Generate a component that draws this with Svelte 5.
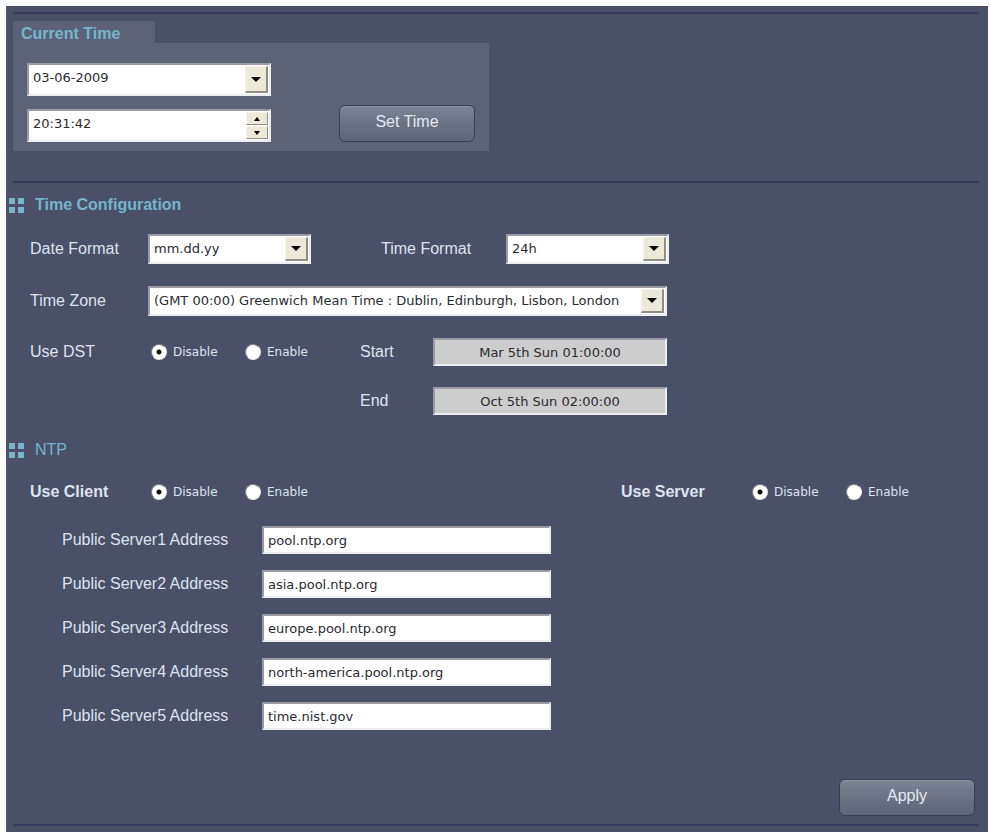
<script>
  let date = '03-06-2009';
  let time = '20:31:42';
  let dateFormat = 'mm.dd.yy';
  let timeFormat = '24h';
  let zone = 'GMT+0';
  let dst = 'disable';
  let client = 'disable';
  let server = 'disable';

  let servers = [
    'pool.ntp.org',
    'asia.pool.ntp.org',
    'europe.pool.ntp.org',
    'north-america.pool.ntp.org',
    'time.nist.gov'
  ];

  // move the clock by whole seconds, wraps at midnight
  function step(n) {
    const [h, m, s] = time.split(':').map(Number);
    const total = (h * 3600 + m * 60 + s + n + 86400) % 86400;
    time = [Math.floor(total / 3600), Math.floor(total / 60) % 60, total % 60]
      .map((v) => String(v).padStart(2, '0'))
      .join(':');
  }
</script>

<main>
  <section class="current">
    <h2 class="tab">Current Time</h2>
    <div class="box">
      <div class="fields">
        <div class="select">
          <select bind:value={date} aria-label="Date">
            <option>03-06-2009</option>
          </select>
          <span class="arrow"></span>
        </div>
        <div class="spinner">
          <input type="text" bind:value={time} aria-label="Time" />
          <div class="steps">
            <button type="button" aria-label="Up" on:click={() => step(1)}>
              <svg width="6" height="4" viewBox="0 0 6 4"><path d="M3 0L6 4H0z" /></svg>
            </button>
            <button type="button" aria-label="Down" on:click={() => step(-1)}>
              <svg width="6" height="4" viewBox="0 0 6 4"><path d="M0 0h6L3 4z" /></svg>
            </button>
          </div>
        </div>
      </div>
      <button type="button" class="btn">Set Time</button>
    </div>
  </section>

  <section class="config">
    <h2>
      <svg width="16" height="15" viewBox="0 0 16 15"><path d="M0 0h6v6H0zM9 0h6v6H9zM0 9h6v6H0zM9 9h6v6H9z" /></svg>
      Time Configuration
    </h2>

    <div class="row">
      <label class="name" for="date-format">Date Format</label>
      <div class="select short">
        <select id="date-format" bind:value={dateFormat}>
          <option>mm.dd.yy</option>
          <option>dd.mm.yy</option>
          <option>yy.mm.dd</option>
        </select>
        <span class="arrow"></span>
      </div>
      <label class="name second" for="time-format">Time Format</label>
      <div class="select short">
        <select id="time-format" bind:value={timeFormat}>
          <option>24h</option>
          <option>12h</option>
        </select>
        <span class="arrow"></span>
      </div>
    </div>

    <div class="row">
      <label class="name" for="zone">Time Zone</label>
      <div class="select long">
        <select id="zone" bind:value={zone}>
          <option value="GMT+0">(GMT 00:00) Greenwich Mean Time : Dublin, Edinburgh, Lisbon, London</option>
        </select>
        <span class="arrow"></span>
      </div>
    </div>

    <div class="row dst">
      <span class="name" id="dst">Use DST</span>
      <div class="radios" role="radiogroup" aria-labelledby="dst">
        <label><input type="radio" name="dst" value="disable" bind:group={dst} />Disable</label>
        <label><input type="radio" name="dst" value="enable" bind:group={dst} />Enable</label>
      </div>
      <div class="range">
        <label for="dst-start">Start</label>
        <input id="dst-start" type="text" value="Mar 5th Sun 01:00:00" disabled />
        <label for="dst-end">End</label>
        <input id="dst-end" type="text" value="Oct 5th Sun 02:00:00" disabled />
      </div>
    </div>
  </section>

  <section class="ntp">
    <h2>
      <svg width="16" height="15" viewBox="0 0 16 15"><path d="M0 0h6v6H0zM9 0h6v6H9zM0 9h6v6H0zM9 9h6v6H9z" /></svg>
      NTP
    </h2>

    <div class="row modes">
      <strong class="name" id="client">Use Client</strong>
      <div class="radios" role="radiogroup" aria-labelledby="client">
        <label><input type="radio" name="client" value="disable" bind:group={client} />Disable</label>
        <label><input type="radio" name="client" value="enable" bind:group={client} />Enable</label>
      </div>
      <strong class="name server" id="server">Use Server</strong>
      <div class="radios" role="radiogroup" aria-labelledby="server">
        <label><input type="radio" name="server" value="disable" bind:group={server} />Disable</label>
        <label><input type="radio" name="server" value="enable" bind:group={server} />Enable</label>
      </div>
    </div>

    <div class="servers">
      {#each servers as address, i}
        <label for="server-{i}">Public Server{i + 1} Address</label>
        <input id="server-{i}" type="text" bind:value={servers[i]} />
      {/each}
    </div>
  </section>

  <footer>
    <button type="button" class="btn">Apply</button>
  </footer>
</main>

<style>
  :global(body) {
    background: #fff;
  }

  * {
    box-sizing: border-box;
  }

  main {
    margin: 6px 2px 0 6px;
    padding: 5px 9px 8px 6px;
    background: #495068;
    border-left: 1px solid #4d6270;
    border-top: 1px solid #454b58;
    font: 16px/20px "Liberation Sans", Arial, sans-serif;
    color: #dfe3f0;
  }

  h2 {
    margin: 0;
    font-size: 16px;
    line-height: 20px;
    color: #76b5cc;
  }

  input,
  select {
    width: 100%;
    height: 28px;
    margin: 0;
    padding: 0 4px;
    border: 2px solid;
    border-color: #9c9ba3 #eceef2 #eceef2 #9c9ba3;
    border-radius: 0;
    background: #fff;
    color: #2b2b2f;
    font: 13px/20px "DejaVu Sans", Tahoma, sans-serif;
    appearance: none;
  }

  /* current time */
  .current {
    border-top: 2px solid #37395c;
    border-bottom: 2px solid #363b57;
    padding: 7px 0 30px;
  }

  .tab {
    width: 142px;
    height: 22px;
    padding: 3px 8px 0;
    background: #5b6277;
  }

  .box {
    display: flex;
    align-items: flex-end;
    justify-content: space-between;
    width: 476px;
    padding: 20px 14px 9px;
    background: #5c6377;
  }

  .fields {
    display: grid;
    gap: 13px;
    width: 244px;
  }

  .fields select,
  .fields input {
    height: 33px;
    padding-bottom: 4px;
  }

  .select,
  .spinner {
    display: grid;
  }

  .select > *,
  .spinner > * {
    grid-area: 1 / 1;
  }

  .arrow {
    justify-self: end;
    display: grid;
    place-items: center;
    width: 23px;
    margin: 3px;
    background: #ece9d8;
    border: 1px solid;
    border-color: #f6f4ea #8f8d84 #8f8d84 #f6f4ea;
    border-right-width: 2px;
    border-bottom-width: 2px;
    pointer-events: none;
  }

  .arrow::after {
    content: "";
    border: 5px solid transparent;
    border-top-color: #000;
    border-bottom: 0;
  }

  .steps {
    justify-self: end;
    display: grid;
    gap: 1px;
    width: 22px;
    margin: 3px;
  }

  .steps button {
    display: grid;
    place-items: center;
    padding: 0;
    border: 1px solid;
    border-color: #f6f4ea #8f8d84 #8f8d84 #f6f4ea;
    background: #ece9d8;
  }

  .btn {
    width: 136px;
    height: 37px;
    padding: 0 0 3px;
    border: 1px solid #363d55;
    border-radius: 6px;
    background: linear-gradient(#7d8495, #6b7284 50%, #5e6578);
    box-shadow: inset 0 1px 0 #8d93a3;
    color: #e6e9f2;
    font: 16px/20px "Liberation Sans", Arial, sans-serif;
  }

  /* sections */
  .config h2,
  .ntp h2 {
    display: flex;
    align-items: center;
    gap: 10px;
    margin-left: -4px;
  }

  .ntp h2 {
    font-weight: normal;
  }

  h2 svg {
    fill: #76b5cc;
  }

  .config {
    padding-top: 12px;
  }

  .row {
    display: flex;
    align-items: center;
    padding-left: 17px;
  }

  .config .row {
    margin-top: 22px;
  }

  .config h2 + .row {
    margin-top: 19px;
  }

  .row select {
    height: 30px;
  }

  .name {
    width: 118px;
    flex: none;
  }

  .second {
    width: 125px;
    margin-left: 70px;
  }

  .short {
    width: 163px;
  }

  .long {
    width: 519px;
  }

  .config .dst {
    align-items: flex-start;
  }

  .dst > * {
    margin-top: 4px;
  }

  .dst .range {
    display: grid;
    grid-template-columns: 73px 234px;
    align-items: center;
    gap: 21px 0;
    margin: 0 0 0 19px;
  }

  .range input {
    background: #cdcdcd;
    text-align: center;
  }

  .radios {
    display: grid;
    grid-template-columns: 94px 96px;
    padding-left: 3px;
    font: 12px/20px "DejaVu Sans", Tahoma, sans-serif;
  }

  .radios label {
    display: flex;
    align-items: center;
    gap: 6px;
  }

  .radios input {
    width: 16px;
    height: 16px;
    padding: 0;
    border: 1px solid #8f959c;
    border-color: #83888c #e6e9e6 #e6e9e6 #83888c;
    border-radius: 50%;
  }

  .radios input:checked {
    background: radial-gradient(circle, #111 0 2px, #fff 3px);
  }

  /* ntp */
  .ntp {
    padding-top: 25px;
  }

  .modes {
    margin-top: 22px;
  }

  .server {
    width: 128px;
    margin-left: auto;
  }

  .modes .radios:last-child {
    margin-right: 37px;
  }

  .servers {
    display: grid;
    grid-template-columns: 200px 289px;
    align-items: center;
    row-gap: 16px;
    padding: 24px 0 0 49px;
  }

  footer {
    display: flex;
    justify-content: flex-end;
    margin-top: 49px;
    padding: 0 4px 8px;
    border-bottom: 2px solid #363a5c;
  }
</style>
